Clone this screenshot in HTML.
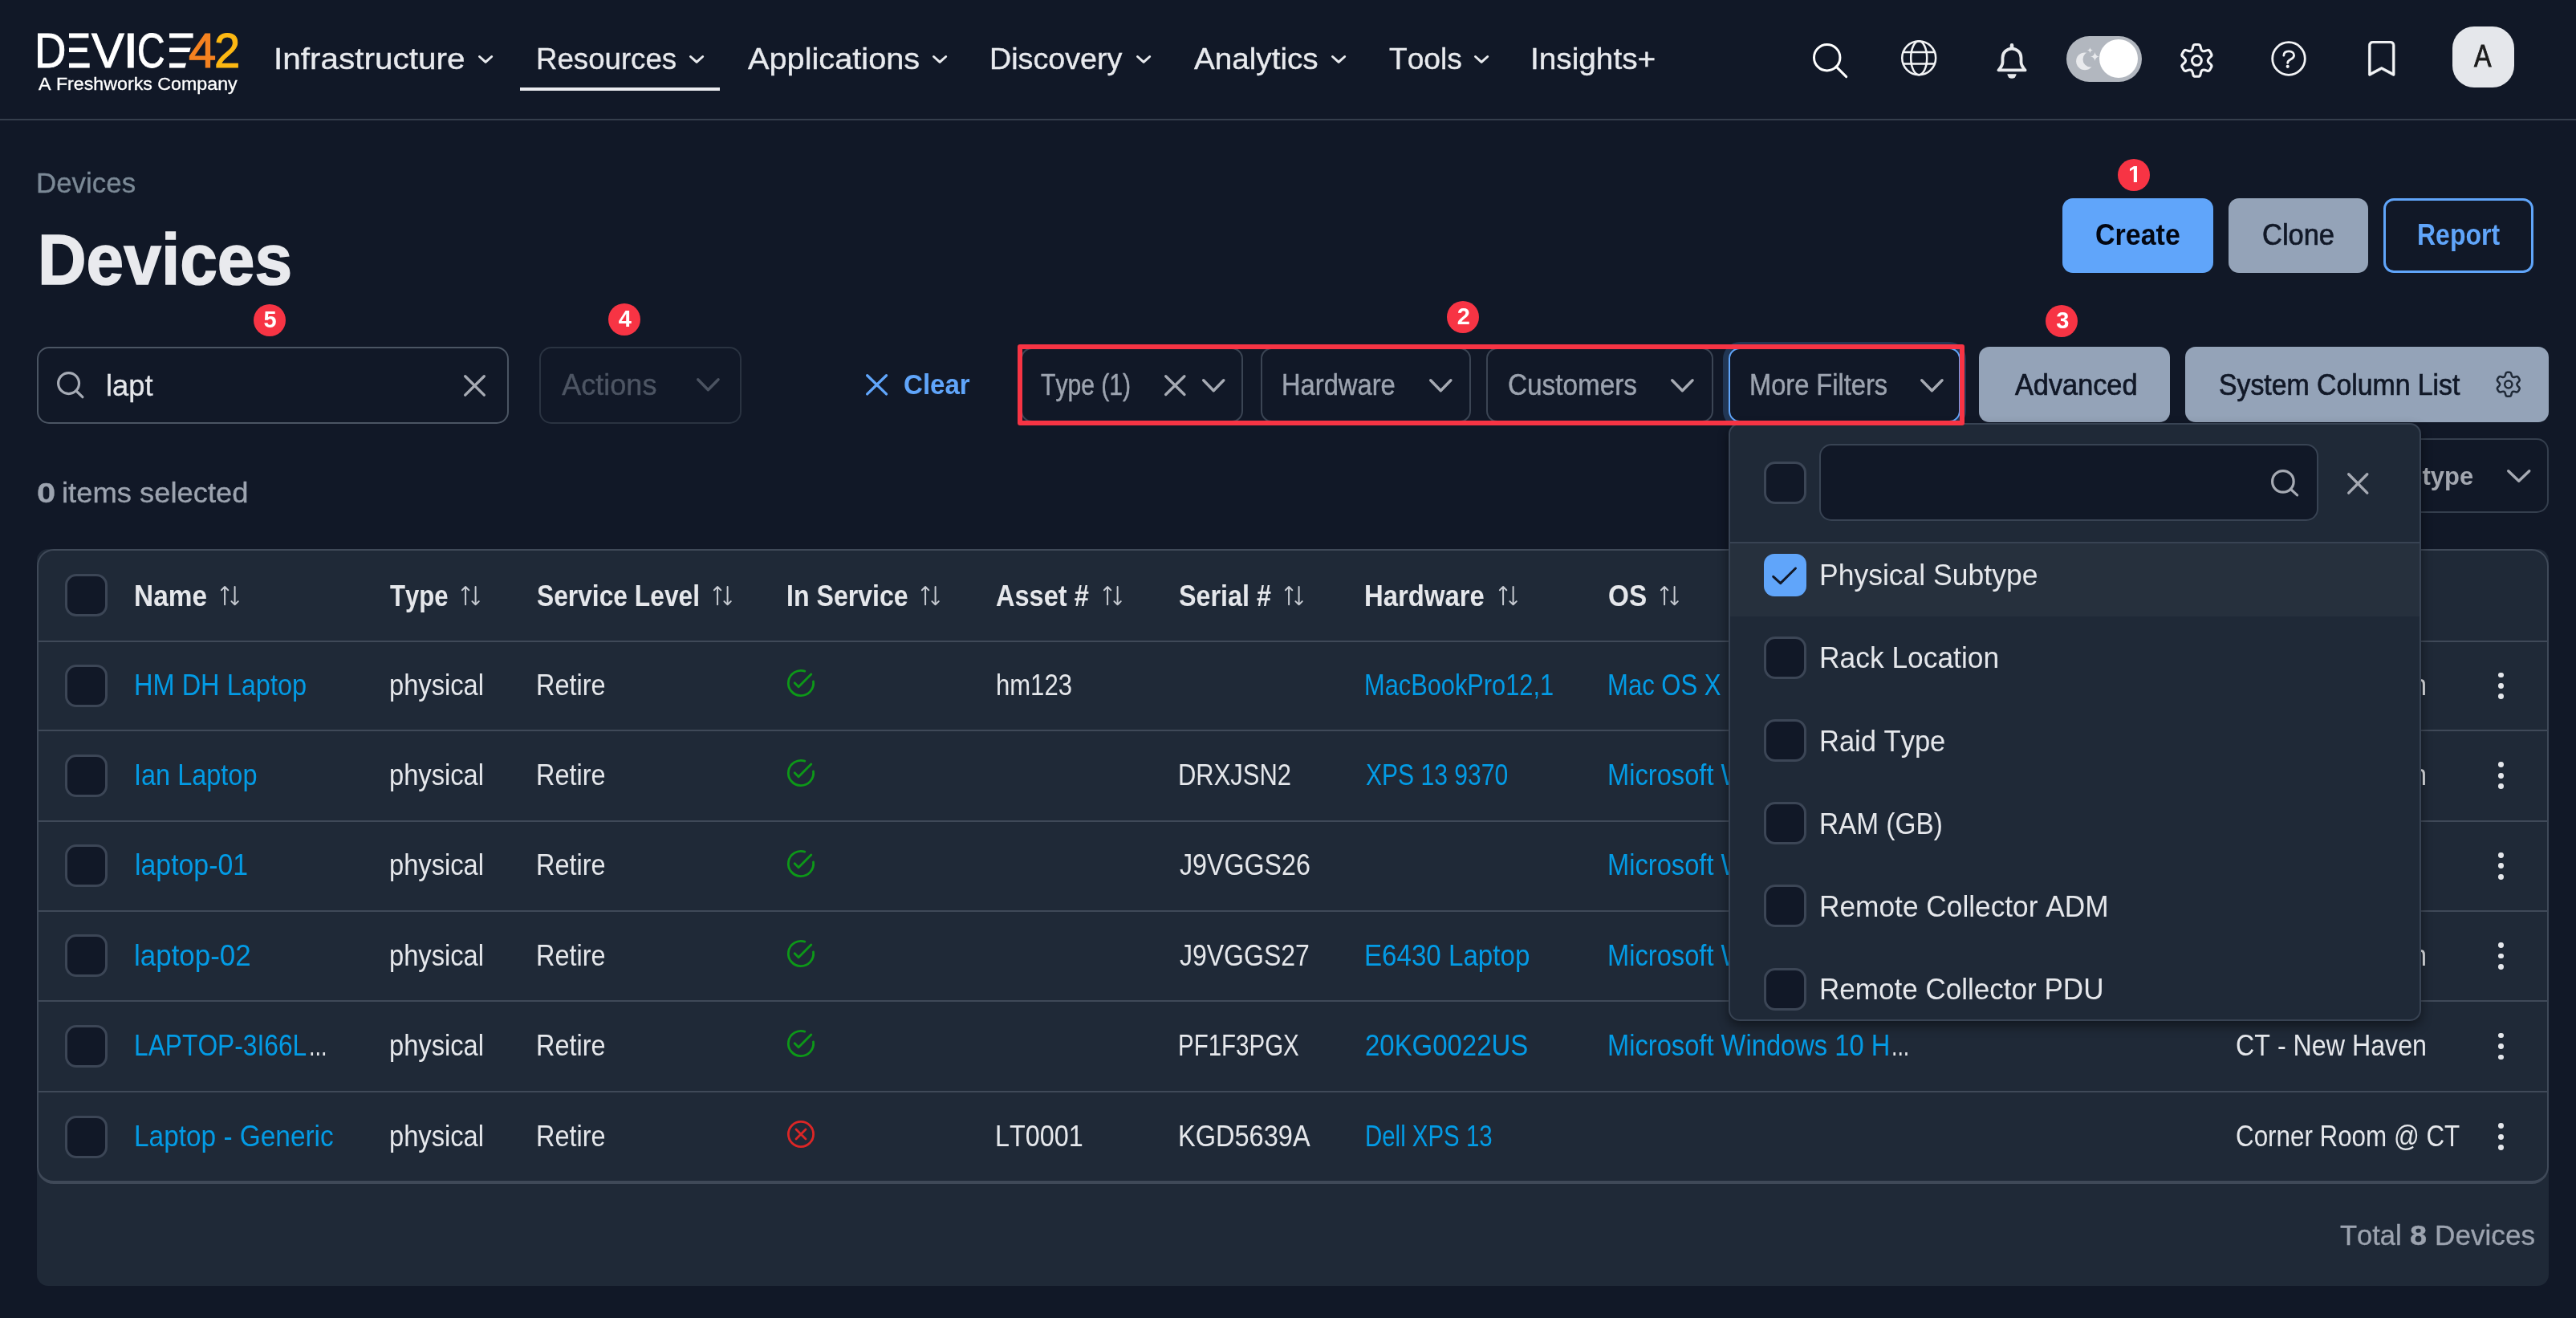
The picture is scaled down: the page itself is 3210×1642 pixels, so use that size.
<!DOCTYPE html>
<html lang="en"><head><meta charset="utf-8"><title>Devices</title>
<style>
html,body{margin:0;padding:0;background:#111827;}
body{width:3210px;height:1642px;position:relative;font-family:"Liberation Sans",sans-serif;font-kerning:none;}
.b{position:absolute;box-sizing:border-box;display:block;}
.t{position:absolute;white-space:nowrap;transform-origin:0 0;display:block;margin:0;font-weight:400;}
#root{position:absolute;left:0;top:0;width:3210px;height:1642px;overflow:hidden;will-change:transform;}
</style></head><body><div id="root">
<header>
<div class="b" style="left:0px;top:148px;width:3210px;height:2px;background:#353e4c;"></div>
<div aria-label="DEVICE42 - A Freshworks Company">
<span class="t" style="left:42.63px;top:28px;font-size:62px;line-height:69px;color:#fff;transform:scaleX(0.8796);-webkit-text-stroke:1px #fff;z-index:2;">D</span>
<span class="t" style="left:73.39px;top:28px;font-size:62px;line-height:69px;color:#fff;transform:scaleX(0.9850);-webkit-text-stroke:1px #fff;">E</span>
<div class="b" style="left:76.2px;top:38px;width:9.8px;height:50px;background:#111827;"></div>
<span class="t" style="left:113.63px;top:28px;font-size:62px;line-height:69px;color:#fff;transform:scaleX(0.9875);-webkit-text-stroke:1px #fff;">V</span>
<span class="t" style="left:152.77px;top:28px;font-size:62px;line-height:69px;color:#fff;transform:scaleX(1.1414);-webkit-text-stroke:1px #fff;">I</span>
<span class="t" style="left:171.17px;top:28px;font-size:62px;line-height:69px;color:#fff;transform:scaleX(0.7717);-webkit-text-stroke:1px #fff;z-index:2;">C</span>
<span class="t" style="left:197.59px;top:28px;font-size:62px;line-height:69px;color:#fff;transform:scaleX(1.1219);-webkit-text-stroke:1px #fff;clip-path:polygon(0 0,100% 0,100% 12%,62% 100%,0 100%);">E</span>
<div class="b" style="left:201.1px;top:38px;width:9.8px;height:50px;background:#111827;"></div>
<span class="t" style="left:235.08px;top:28px;font-size:62px;line-height:69px;color:#f58220;transform:scaleX(0.9954);-webkit-text-stroke:1.2px #f58220;">4</span>
<span class="t" style="left:266.99px;top:28px;font-size:62px;line-height:69px;color:#fdb813;transform:scaleX(0.9347);-webkit-text-stroke:1.2px #fdb813;">2</span>
<span class="t" style="left:47.85px;top:93px;font-size:21.5px;line-height:24px;color:#fff;transform:scaleX(1.0797);-webkit-text-stroke:0.3px #fff;">A Freshworks Company</span>
</div>
<nav>
<span class="t" style="left:340.86px;top:53px;font-size:37px;line-height:41px;color:#e8eaee;transform:scaleX(1.0939);-webkit-text-stroke:0.35px #e8eaee;">Infrastructure</span>
<svg class="b" style="left:595.50px;top:68.70px;overflow:visible;" width="18.20" height="9.90"><polyline points="1.50,1.50 9.10,8.40 16.70,1.50" fill="none" stroke="#e8eaee" stroke-width="3" stroke-linecap="round" stroke-linejoin="round"/></svg>
<span class="t" style="left:667.69px;top:53px;font-size:37px;line-height:41px;color:#e8eaee;transform:scaleX(0.9903);-webkit-text-stroke:0.35px #e8eaee;">Resources</span>
<svg class="b" style="left:858.80px;top:68.70px;overflow:visible;" width="18.20" height="9.90"><polyline points="1.50,1.50 9.10,8.40 16.70,1.50" fill="none" stroke="#e8eaee" stroke-width="3" stroke-linecap="round" stroke-linejoin="round"/></svg>
<span class="t" style="left:931.72px;top:53px;font-size:37px;line-height:41px;color:#e8eaee;transform:scaleX(1.0737);-webkit-text-stroke:0.35px #e8eaee;">Applications</span>
<svg class="b" style="left:1162.00px;top:68.70px;overflow:visible;" width="18.20" height="9.90"><polyline points="1.50,1.50 9.10,8.40 16.70,1.50" fill="none" stroke="#e8eaee" stroke-width="3" stroke-linecap="round" stroke-linejoin="round"/></svg>
<span class="t" style="left:1233.21px;top:53px;font-size:37px;line-height:41px;color:#e8eaee;transform:scaleX(1.0181);-webkit-text-stroke:0.35px #e8eaee;">Discovery</span>
<svg class="b" style="left:1416.00px;top:68.70px;overflow:visible;" width="18.20" height="9.90"><polyline points="1.50,1.50 9.10,8.40 16.70,1.50" fill="none" stroke="#e8eaee" stroke-width="3" stroke-linecap="round" stroke-linejoin="round"/></svg>
<span class="t" style="left:1488.22px;top:53px;font-size:37px;line-height:41px;color:#e8eaee;transform:scaleX(1.0447);-webkit-text-stroke:0.35px #e8eaee;">Analytics</span>
<svg class="b" style="left:1658.50px;top:68.70px;overflow:visible;" width="18.20" height="9.90"><polyline points="1.50,1.50 9.10,8.40 16.70,1.50" fill="none" stroke="#e8eaee" stroke-width="3" stroke-linecap="round" stroke-linejoin="round"/></svg>
<span class="t" style="left:1730.97px;top:53px;font-size:37px;line-height:41px;color:#e8eaee;transform:scaleX(1.0044);-webkit-text-stroke:0.35px #e8eaee;">Tools</span>
<svg class="b" style="left:1837.00px;top:68.70px;overflow:visible;" width="18.20" height="9.90"><polyline points="1.50,1.50 9.10,8.40 16.70,1.50" fill="none" stroke="#e8eaee" stroke-width="3" stroke-linecap="round" stroke-linejoin="round"/></svg>
<span class="t" style="left:1907.22px;top:53px;font-size:37px;line-height:41px;color:#e8eaee;transform:scaleX(1.0474);-webkit-text-stroke:0.35px #e8eaee;">Insights+</span>
<div class="b" style="left:648px;top:109px;width:249px;height:4px;background:#eaebef;"></div>
</nav>
<svg class="b" style="left:2259.30px;top:53.70px;overflow:visible;" width="43.20" height="43.10"><circle cx="17.71" cy="17.71" r="16.21" fill="none" stroke="#fff" stroke-width="3"/><path d="M29.18 29.18L41.70 41.60" stroke="#fff" stroke-width="3" stroke-linecap="round"/></svg>
<svg class="b" style="left:2369.40px;top:50.20px;overflow:visible;" width="44.40" height="44.40"><g fill="none" stroke="#f3f4f6" stroke-width="2.5"><circle cx="22.2" cy="22.2" r="20.95"/><ellipse cx="22.2" cy="22.2" rx="10.00" ry="20.95"/><path d="M2.53 15.00H41.87M2.53 29.40H41.87"/></g></svg>
<svg class="b" style="left:2488.20px;top:54.00px;overflow:visible;" width="38.00" height="44.00"><g fill="none" stroke="#e8eaed" stroke-width="3.8" stroke-linejoin="round" stroke-linecap="round"><path d="M19 6.6C12.5 6.6 7.5 11.6 7.5 18V23.5C7.5 27 5 30.5 2.4 33.4H35.6C33 30.5 30.5 27 30.5 23.5V18C30.5 11.6 25.5 6.6 19 6.6Z"/><path d="M19 2.4V5" stroke-width="4.6"/></g><path d="M13.4 38.3H24.6A5.6 5.5 0 0 1 13.4 38.3Z" fill="#e8eaed"/></svg>
<div class="b" style="left:2575px;top:44.8px;width:93.9px;height:57.3px;background:#b2b7bf;border-radius:29px;"></div>
<svg class="b" style="left:2575.00px;top:44.80px;overflow:visible;" width="94.00" height="57.30"><circle cx="23.0" cy="31.3" r="10.9" fill="#e9eaed"/><circle cx="30.2" cy="28.9" r="9.7" fill="#b2b7bf"/><path d="M29.4 14.000000000000002Q29.83 17.17 33.0 17.6Q29.83 18.03 29.4 21.200000000000003Q28.97 18.03 25.799999999999997 17.6Q28.97 17.17 29.4 14.000000000000002ZM35.5 20.1Q36.16 24.94 41.0 25.6Q36.16 26.26 35.5 31.1Q34.84 26.26 30.0 25.6Q34.84 24.94 35.5 20.1Z" fill="#e9eaed"/></svg>
<div class="b" style="left:2615.8px;top:48.8px;width:48.3px;height:48.3px;background:#fff;border-radius:25px;"></div>
<svg class="b" style="left:2714.20px;top:52.40px;overflow:visible;" width="46.80" height="46.80"><g fill="none" stroke="#f3f4f6" stroke-width="3.1" stroke-linejoin="round"><path d="M30.31 11.43Q29.05 10.70 28.57 8.52L27.93 5.69Q27.45 3.51 25.21 3.51L21.59 3.51Q19.35 3.51 18.87 5.69L18.23 8.52Q17.75 10.70 16.49 11.43L16.49 11.43Q15.23 12.15 13.10 11.49L10.33 10.62Q8.20 9.95 7.08 11.88L5.27 15.02Q4.15 16.96 5.79 18.47L7.93 20.44Q9.58 21.95 9.58 23.40L9.58 23.40Q9.58 24.85 7.93 26.36L5.79 28.33Q4.15 29.84 5.27 31.78L7.08 34.92Q8.20 36.85 10.33 36.18L13.10 35.31Q15.23 34.65 16.49 35.37L16.49 35.37Q17.75 36.10 18.23 38.28L18.87 41.11Q19.35 43.29 21.59 43.29L25.21 43.29Q27.45 43.29 27.93 41.11L28.57 38.28Q29.05 36.10 30.31 35.37L30.31 35.37Q31.57 34.65 33.70 35.31L36.47 36.18Q38.60 36.85 39.72 34.92L41.53 31.78Q42.65 29.84 41.01 28.33L38.87 26.36Q37.22 24.85 37.22 23.40L37.22 23.40Q37.22 21.95 38.87 20.44L41.01 18.47Q42.65 16.96 41.53 15.02L39.72 11.88Q38.60 9.95 36.47 10.62L33.70 11.49Q31.57 12.15 30.31 11.43Z"/><circle cx="23.400000000000002" cy="23.400000000000002" r="5.9"/></g></svg>
<svg class="b" style="left:2827.30px;top:47.60px;overflow:visible;" width="50.00" height="50.00"><g transform="translate(25,25)" fill="none" stroke="#f3f4f6" stroke-width="2.8" stroke-linecap="round"><circle cx="0" cy="0" r="20.3"/><path d="M-6.2 -3.8C-6.2 -7.4 -3.4 -9.2 0.3 -9.2C4 -9.2 6.6 -7 6.6 -4.1C6.6 -1.3 4.5 -0.1 2.3 1C-0.2 2.2 -1.3 3 -1.3 5.4"/></g><circle cx="23.7" cy="34.8" r="2.1" fill="#f3f4f6"/></svg>
<svg class="b" style="left:2946px;top:51px;color:#f3f4f6;stroke:#f3f4f6;stroke-width:.25;" width="43.5" height="43.5" viewBox="0 0 16 16" fill="currentColor"><path d="M2 2a2 2 0 0 1 2-2h8a2 2 0 0 1 2 2v13.5a.5.5 0 0 1-.777.416L8 13.101l-5.223 2.815A.5.5 0 0 1 2 15.5zm2-1a1 1 0 0 0-1 1v12.566l4.723-2.482a.5.5 0 0 1 .554 0L13 14.566V2a1 1 0 0 0-1-1z"/></svg>
<div class="b" style="left:3056px;top:32.7px;width:77px;height:76.5px;background:#e5e7eb;border-radius:27px;"></div>
<span class="t" style="left:3083.34px;top:48px;font-size:38.5px;line-height:43px;color:#1c1c1c;transform:scaleX(0.8383);-webkit-text-stroke:0.9px #1c1c1c;">A</span>
</header>
<main>
<span class="t" style="left:44.74px;top:208px;font-size:35.5px;line-height:40px;color:#7b8996;transform:scaleX(0.9831);-webkit-text-stroke:0.35px #7b8996;">Devices</span>
<h1 class="t" style="left:46.99px;top:273px;font-size:89px;line-height:100px;color:#e9eaee;font-weight:700;transform:scaleX(0.9425);-webkit-text-stroke:1.6px #e9eaee;">Devices</h1>
<div class="b" style="left:2638.8px;top:197.9px;width:40.2px;height:40.2px;background:#f73444;border-radius:20.1px;"></div>
<span class="t" style="left:2652.21px;top:201px;font-size:29px;line-height:32px;color:#fff;font-weight:700;transform:scaleX(1.02);clip-path:polygon(0px 0px,20px 0px,20px 22.9px,10.8px 22.9px,10.8px 30px,6.7px 30px,6.7px 22.9px,0px 22.9px);">1</span>
<div class="b" style="left:2569.7px;top:247.3px;width:188.2px;height:92.7px;background:#60a5fa;border-radius:13px;"></div>
<span class="t" style="left:2611.21px;top:272px;font-size:36.6px;line-height:41px;color:#030712;font-weight:700;transform:scaleX(0.9292);">Create</span>
<div class="b" style="left:2776.6px;top:247.3px;width:174.2px;height:92.7px;background:#94a3b8;border-radius:13px;"></div>
<span class="t" style="left:2819.35px;top:272px;font-size:36.6px;line-height:41px;color:#111827;transform:scaleX(0.9420);-webkit-text-stroke:0.7px #111827;">Clone</span>
<div class="b" style="left:2970px;top:247.3px;width:187px;height:92.7px;border:3px solid #60a5fa;border-radius:13px;"></div>
<span class="t" style="left:3011.86px;top:272px;font-size:36.6px;line-height:41px;color:#60a5fa;font-weight:700;transform:scaleX(0.8754);">Report</span>
<div class="b" style="left:315.79999999999995px;top:378.79999999999995px;width:40.2px;height:40.2px;background:#f73444;border-radius:20.1px;"></div>
<span class="t" style="left:328.59px;top:382px;font-size:29px;line-height:32px;color:#fff;font-weight:700;">5</span>
<div class="b" style="left:758.1px;top:378.0px;width:40.2px;height:40.2px;background:#f73444;border-radius:20.1px;"></div>
<span class="t" style="left:770.79px;top:381px;font-size:29px;line-height:32px;color:#fff;font-weight:700;">4</span>
<div class="b" style="left:1802.9px;top:374.5px;width:40.2px;height:40.2px;background:#f73444;border-radius:20.1px;"></div>
<span class="t" style="left:1815.81px;top:378px;font-size:29px;line-height:32px;color:#fff;font-weight:700;">2</span>
<div class="b" style="left:2549.1px;top:379.7px;width:40.2px;height:40.2px;background:#f73444;border-radius:20.1px;"></div>
<span class="t" style="left:2562.13px;top:383px;font-size:29px;line-height:32px;color:#fff;font-weight:700;">3</span>
<div class="b" style="left:46px;top:432px;width:587.5px;height:96px;border:2.5px solid #4b5563;border-radius:15px;"></div>
<svg class="b" style="left:70.80px;top:463.30px;overflow:visible;" width="33.50" height="33.30"><circle cx="14.57" cy="14.57" r="12.97" fill="none" stroke="#a6abb5" stroke-width="3.2"/><path d="M23.75 23.75L31.90 31.70" stroke="#a6abb5" stroke-width="3.2" stroke-linecap="round"/></svg>
<span class="t" style="left:131.55px;top:460px;font-size:36px;line-height:41px;color:#e5e7eb;transform:scaleX(1.0099);-webkit-text-stroke:0.3px #e5e7eb;">lapt</span>
<svg class="b" style="left:578.00px;top:467.00px;overflow:visible;" width="27.00" height="26.80"><path d="M1.7 1.7L25.30 25.10M25.30 1.7L1.7 25.10" fill="none" stroke="#a6aab3" stroke-width="3.4" stroke-linecap="round"/></svg>
<div class="b" style="left:672.1px;top:432px;width:251.5px;height:95.5px;border:2.5px solid #2a3341;border-radius:15px;"></div>
<span class="t" style="left:700.33px;top:459px;font-size:36px;line-height:41px;color:#4d5563;-webkit-text-stroke:0.4px #4d5563;">Actions</span>
<svg class="b" style="left:868.30px;top:471.40px;overflow:visible;" width="28.80" height="16.50"><polyline points="1.70,1.70 14.40,14.80 27.10,1.70" fill="none" stroke="#4b5361" stroke-width="3.4" stroke-linecap="round" stroke-linejoin="round"/></svg>
<svg class="b" style="left:1078.80px;top:465.80px;overflow:visible;" width="27.20" height="26.60"><path d="M1.7 1.7L25.50 24.90M25.50 1.7L1.7 24.90" fill="none" stroke="#60a5fa" stroke-width="3.4" stroke-linecap="round"/></svg>
<span class="t" style="left:1125.94px;top:459px;font-size:35.4px;line-height:40px;color:#60a5fa;font-weight:700;transform:scaleX(0.9346);">Clear</span>
<div class="b" style="left:1271.6px;top:433.2px;width:277.4px;height:92.8px;border:2.4px solid #3b4554;border-radius:14px;"></div>
<span class="t" style="left:1297.42px;top:459px;font-size:36px;line-height:41px;color:#9ca3af;transform:scaleX(0.8359);-webkit-text-stroke:0.45px #9ca3af;">Type (1)</span>
<svg class="b" style="left:1450.70px;top:467.20px;overflow:visible;" width="26.60" height="26.20"><path d="M1.7 1.7L24.90 24.50M24.90 1.7L1.7 24.50" fill="none" stroke="#a6aab3" stroke-width="3.4" stroke-linecap="round"/></svg>
<svg class="b" style="left:1498.30px;top:472.00px;overflow:visible;" width="28.50" height="16.50"><polyline points="1.70,1.70 14.25,14.80 26.80,1.70" fill="none" stroke="#a6aab3" stroke-width="3.4" stroke-linecap="round" stroke-linejoin="round"/></svg>
<div class="b" style="left:1570.6px;top:433.2px;width:262.2px;height:92.8px;border:2.4px solid #3b4554;border-radius:14px;"></div>
<span class="t" style="left:1596.52px;top:459px;font-size:36px;line-height:41px;color:#9ca3af;transform:scaleX(0.9082);-webkit-text-stroke:0.45px #9ca3af;">Hardware</span>
<svg class="b" style="left:1780.60px;top:472.00px;overflow:visible;" width="28.60" height="16.50"><polyline points="1.70,1.70 14.30,14.80 26.90,1.70" fill="none" stroke="#a6aab3" stroke-width="3.4" stroke-linecap="round" stroke-linejoin="round"/></svg>
<div class="b" style="left:1852.4px;top:433.2px;width:282.4px;height:92.8px;border:2.4px solid #3b4554;border-radius:14px;"></div>
<span class="t" style="left:1879.01px;top:459px;font-size:36px;line-height:41px;color:#9ca3af;transform:scaleX(0.9250);-webkit-text-stroke:0.45px #9ca3af;">Customers</span>
<svg class="b" style="left:2082.00px;top:472.00px;overflow:visible;" width="28.80" height="16.50"><polyline points="1.70,1.70 14.40,14.80 27.10,1.70" fill="none" stroke="#a6aab3" stroke-width="3.4" stroke-linecap="round" stroke-linejoin="round"/></svg>
<div class="b" style="left:2154.0px;top:433.2px;width:289.2px;height:92.8px;border:2.4px solid #60a5fa;border-radius:14px;box-shadow:0 0 0 7px #213654;"></div>
<span class="t" style="left:2180.02px;top:459px;font-size:36px;line-height:41px;color:#9ca3af;transform:scaleX(0.9060);-webkit-text-stroke:0.45px #9ca3af;">More Filters</span>
<svg class="b" style="left:2393.40px;top:472.00px;overflow:visible;" width="28.80" height="16.50"><polyline points="1.70,1.70 14.40,14.80 27.10,1.70" fill="none" stroke="#a6aab3" stroke-width="3.4" stroke-linecap="round" stroke-linejoin="round"/></svg>
<div class="b" style="left:2466px;top:432px;width:238px;height:93.6px;background:#94a3b8;border-radius:13px;"></div>
<span class="t" style="left:2510.53px;top:459px;font-size:36.6px;line-height:41px;color:#111827;transform:scaleX(0.9373);-webkit-text-stroke:0.7px #111827;">Advanced</span>
<div class="b" style="left:2723px;top:432px;width:453px;height:93.6px;background:#94a3b8;border-radius:13px;"></div>
<span class="t" style="left:2765.06px;top:459px;font-size:36.6px;line-height:41px;color:#111827;transform:scaleX(0.9236);-webkit-text-stroke:0.7px #111827;">System Column List</span>
<svg class="b" style="left:3108.40px;top:460.70px;overflow:visible;" width="35.60" height="35.60"><g fill="none" stroke="#1f2937" stroke-width="2.5" stroke-linejoin="round"><path d="M23.07 8.67Q22.11 8.12 21.72 6.48L21.24 4.44Q20.85 2.81 19.17 2.81L16.43 2.81Q14.75 2.81 14.36 4.44L13.88 6.48Q13.49 8.12 12.53 8.67L12.53 8.67Q11.57 9.22 9.96 8.74L7.95 8.14Q6.34 7.66 5.50 9.12L4.13 11.49Q3.29 12.95 4.51 14.10L6.03 15.54Q7.26 16.69 7.26 17.80L7.26 17.80Q7.26 18.91 6.03 20.06L4.51 21.50Q3.29 22.65 4.13 24.11L5.50 26.48Q6.34 27.94 7.95 27.46L9.96 26.86Q11.57 26.38 12.53 26.93L12.53 26.93Q13.49 27.48 13.88 29.12L14.36 31.16Q14.75 32.79 16.43 32.79L19.17 32.79Q20.85 32.79 21.24 31.16L21.72 29.12Q22.11 27.48 23.07 26.93L23.07 26.93Q24.03 26.38 25.64 26.86L27.65 27.46Q29.26 27.94 30.10 26.48L31.47 24.11Q32.31 22.65 31.09 21.50L29.57 20.06Q28.34 18.91 28.34 17.80L28.34 17.80Q28.34 16.69 29.57 15.54L31.09 14.10Q32.31 12.95 31.47 11.49L30.10 9.12Q29.26 7.66 27.65 8.14L25.64 8.74Q24.03 9.22 23.07 8.67Z"/><circle cx="17.8" cy="17.8" r="4.6"/></g></svg>
<div class="b" style="left:2900px;top:546.2px;width:275.5px;height:93px;border:2.5px solid #343e4d;border-radius:15px;"></div>
<span class="t" style="left:2959.97px;top:576px;font-size:31px;line-height:35px;color:#a3a7b0;font-weight:700;transform:scaleX(0.9984);">Subtype</span>
<svg class="b" style="left:3123.80px;top:585.10px;overflow:visible;" width="29.50" height="15.90"><polyline points="1.70,1.70 14.75,14.20 27.80,1.70" fill="none" stroke="#a6aab3" stroke-width="3.4" stroke-linecap="round" stroke-linejoin="round"/></svg>
<span class="t" style="left:45.55px;top:594px;font-size:35.5px;line-height:40px;color:#9ca3af;font-weight:700;transform:scaleX(1.1728);-webkit-text-stroke:0.35px #9ca3af;">0</span>
<span class="t" style="left:77.37px;top:594px;font-size:35px;line-height:39px;color:#9ca3af;transform:scaleX(1.0392);-webkit-text-stroke:0.35px #9ca3af;">items selected</span>
<section aria-label="Devices table">
<div class="b" style="left:46px;top:684px;width:3130px;height:918px;background:#1f2937;border-radius:14px;"></div>
<div class="b" style="left:46px;top:684px;width:3130px;height:791px;background:#1f2937;border:2.3px solid #3f4958;border-radius:21px;border-bottom-width:4px;"></div>
<div class="b" style="left:48.3px;top:797.85px;width:3125.4px;height:2.1px;background:#3f4958;"></div>
<div class="b" style="left:48.3px;top:908.75px;width:3125.4px;height:2.1px;background:#3f4958;"></div>
<div class="b" style="left:48.3px;top:1021.5500000000001px;width:3125.4px;height:2.1px;background:#3f4958;"></div>
<div class="b" style="left:48.3px;top:1133.8500000000001px;width:3125.4px;height:2.1px;background:#3f4958;"></div>
<div class="b" style="left:48.3px;top:1245.95px;width:3125.4px;height:2.1px;background:#3f4958;"></div>
<div class="b" style="left:48.3px;top:1358.75px;width:3125.4px;height:2.1px;background:#3f4958;"></div>
<div class="b" style="left:81px;top:715px;width:53px;height:53px;background:#111827;border:3.6px solid #3c4656;border-radius:14px;"></div>
<span class="t" style="left:166.76px;top:722px;font-size:36.3px;line-height:41px;color:#e5e7eb;font-weight:700;transform:scaleX(0.9212);">Name</span>
<svg class="b" style="left:274.60px;top:729.90px;overflow:visible;" width="22.60" height="24.30"><path d="M5.10 23.30V1.00M0.90 5.20L5.10 1.00L9.30 5.20M17.60 1.00V23.30M13.40 19.10L17.60 23.30L21.80 19.10" fill="none" stroke="#c6cad1" stroke-width="2" stroke-linecap="round" stroke-linejoin="round"/></svg>
<span class="t" style="left:485.55px;top:722px;font-size:36.3px;line-height:41px;color:#e5e7eb;font-weight:700;transform:scaleX(0.8571);">Type</span>
<svg class="b" style="left:575.40px;top:729.90px;overflow:visible;" width="22.60" height="24.30"><path d="M5.10 23.30V1.00M0.90 5.20L5.10 1.00L9.30 5.20M17.60 1.00V23.30M13.40 19.10L17.60 23.30L21.80 19.10" fill="none" stroke="#c6cad1" stroke-width="2" stroke-linecap="round" stroke-linejoin="round"/></svg>
<span class="t" style="left:669.29px;top:722px;font-size:36.3px;line-height:41px;color:#e5e7eb;font-weight:700;transform:scaleX(0.8749);">Service Level</span>
<svg class="b" style="left:888.60px;top:729.90px;overflow:visible;" width="22.60" height="24.30"><path d="M5.10 23.30V1.00M0.90 5.20L5.10 1.00L9.30 5.20M17.60 1.00V23.30M13.40 19.10L17.60 23.30L21.80 19.10" fill="none" stroke="#c6cad1" stroke-width="2" stroke-linecap="round" stroke-linejoin="round"/></svg>
<span class="t" style="left:980.05px;top:722px;font-size:36.3px;line-height:41px;color:#e5e7eb;font-weight:700;transform:scaleX(0.8847);">In Service</span>
<svg class="b" style="left:1148.40px;top:729.90px;overflow:visible;" width="22.60" height="24.30"><path d="M5.10 23.30V1.00M0.90 5.20L5.10 1.00L9.30 5.20M17.60 1.00V23.30M13.40 19.10L17.60 23.30L21.80 19.10" fill="none" stroke="#c6cad1" stroke-width="2" stroke-linecap="round" stroke-linejoin="round"/></svg>
<span class="t" style="left:1241.39px;top:722px;font-size:36.3px;line-height:41px;color:#e5e7eb;font-weight:700;transform:scaleX(0.8970);">Asset #</span>
<svg class="b" style="left:1374.60px;top:729.90px;overflow:visible;" width="22.60" height="24.30"><path d="M5.10 23.30V1.00M0.90 5.20L5.10 1.00L9.30 5.20M17.60 1.00V23.30M13.40 19.10L17.60 23.30L21.80 19.10" fill="none" stroke="#c6cad1" stroke-width="2" stroke-linecap="round" stroke-linejoin="round"/></svg>
<span class="t" style="left:1468.77px;top:722px;font-size:36.3px;line-height:41px;color:#e5e7eb;font-weight:700;transform:scaleX(0.8900);">Serial #</span>
<svg class="b" style="left:1601.00px;top:729.90px;overflow:visible;" width="22.60" height="24.30"><path d="M5.10 23.30V1.00M0.90 5.20L5.10 1.00L9.30 5.20M17.60 1.00V23.30M13.40 19.10L17.60 23.30L21.80 19.10" fill="none" stroke="#c6cad1" stroke-width="2" stroke-linecap="round" stroke-linejoin="round"/></svg>
<span class="t" style="left:1700.00px;top:722px;font-size:36.3px;line-height:41px;color:#e5e7eb;font-weight:700;transform:scaleX(0.9056);">Hardware</span>
<svg class="b" style="left:1867.80px;top:729.90px;overflow:visible;" width="22.60" height="24.30"><path d="M5.10 23.30V1.00M0.90 5.20L5.10 1.00L9.30 5.20M17.60 1.00V23.30M13.40 19.10L17.60 23.30L21.80 19.10" fill="none" stroke="#c6cad1" stroke-width="2" stroke-linecap="round" stroke-linejoin="round"/></svg>
<span class="t" style="left:2003.83px;top:722px;font-size:36.3px;line-height:41px;color:#e5e7eb;font-weight:700;transform:scaleX(0.9184);">OS</span>
<svg class="b" style="left:2068.60px;top:729.90px;overflow:visible;" width="22.60" height="24.30"><path d="M5.10 23.30V1.00M0.90 5.20L5.10 1.00L9.30 5.20M17.60 1.00V23.30M13.40 19.10L17.60 23.30L21.80 19.10" fill="none" stroke="#c6cad1" stroke-width="2" stroke-linecap="round" stroke-linejoin="round"/></svg>
<div class="b" style="left:81px;top:827.8499999999999px;width:53px;height:53px;background:#111827;border:3.6px solid #3c4656;border-radius:14px;"></div>
<span class="t" style="left:167.13px;top:833px;font-size:36px;line-height:41px;color:#039be5;transform:scaleX(0.9036);">HM DH Laptop</span>
<span class="t" style="left:484.60px;top:833px;font-size:36px;line-height:41px;color:#e5e7eb;transform:scaleX(0.9072);">physical</span>
<span class="t" style="left:668.34px;top:833px;font-size:36px;line-height:41px;color:#e5e7eb;transform:scaleX(0.9008);">Retire</span>
<svg class="b" style="left:978.20px;top:831.25px;overflow:visible;" width="40.00" height="40.00"><g fill="none" stroke="#0d9818" stroke-width="2.8" stroke-linecap="round" stroke-linejoin="round"><path d="M35.51 17.93A15.65 15.65 0 1 1 24.84 5.12"/><polyline points="12.2,19.7 17.1,24.8 32.8,8.9"/></g></svg>
<span class="t" style="left:1240.85px;top:833px;font-size:36px;line-height:41px;color:#e5e7eb;transform:scaleX(0.8623);">hm123</span>
<span class="t" style="left:1700.47px;top:833px;font-size:36px;line-height:41px;color:#039be5;transform:scaleX(0.8551);">MacBookPro12,1</span>
<span class="t" style="left:2003.45px;top:833px;font-size:36px;line-height:41px;color:#039be5;transform:scaleX(0.8632);">Mac OS X</span>
<span class="t" style="left:2786.36px;top:833px;font-size:36px;line-height:41px;color:#e5e7eb;transform:scaleX(0.8946);">CT - New Haven</span>
<div class="b" style="left:3113.25px;top:837.5499999999998px;width:6.9px;height:6.9px;background:#e5e7eb;border-radius:3.45px;"></div>
<div class="b" style="left:3113.25px;top:850.9999999999999px;width:6.9px;height:6.9px;background:#e5e7eb;border-radius:3.45px;"></div>
<div class="b" style="left:3113.25px;top:864.4499999999999px;width:6.9px;height:6.9px;background:#e5e7eb;border-radius:3.45px;"></div>
<div class="b" style="left:81px;top:939.7px;width:53px;height:53px;background:#111827;border:3.6px solid #3c4656;border-radius:14px;"></div>
<span class="t" style="left:166.80px;top:945px;font-size:36px;line-height:41px;color:#039be5;transform:scaleX(0.9019);">Ian Laptop</span>
<span class="t" style="left:484.60px;top:945px;font-size:36px;line-height:41px;color:#e5e7eb;transform:scaleX(0.9072);">physical</span>
<span class="t" style="left:668.34px;top:945px;font-size:36px;line-height:41px;color:#e5e7eb;transform:scaleX(0.9008);">Retire</span>
<svg class="b" style="left:978.20px;top:943.10px;overflow:visible;" width="40.00" height="40.00"><g fill="none" stroke="#0d9818" stroke-width="2.8" stroke-linecap="round" stroke-linejoin="round"><path d="M35.51 17.93A15.65 15.65 0 1 1 24.84 5.12"/><polyline points="12.2,19.7 17.1,24.8 32.8,8.9"/></g></svg>
<span class="t" style="left:1467.96px;top:945px;font-size:36px;line-height:41px;color:#e5e7eb;transform:scaleX(0.8595);">DRXJSN2</span>
<span class="t" style="left:1702.32px;top:945px;font-size:36px;line-height:41px;color:#039be5;transform:scaleX(0.8354);">XPS 13 9370</span>
<span class="t" style="left:2003.32px;top:945px;font-size:36px;line-height:41px;color:#039be5;transform:scaleX(0.9076);">Microsoft Windows 10 H</span>
<span class="t" style="left:2356.56px;top:945px;font-size:36px;line-height:41px;color:#e5e7eb;transform:scaleX(0.7426);">...</span>
<span class="t" style="left:2786.36px;top:945px;font-size:36px;line-height:41px;color:#e5e7eb;transform:scaleX(0.8946);">CT - New Haven</span>
<div class="b" style="left:3113.25px;top:949.4px;width:6.9px;height:6.9px;background:#e5e7eb;border-radius:3.45px;"></div>
<div class="b" style="left:3113.25px;top:962.85px;width:6.9px;height:6.9px;background:#e5e7eb;border-radius:3.45px;"></div>
<div class="b" style="left:3113.25px;top:976.3000000000001px;width:6.9px;height:6.9px;background:#e5e7eb;border-radius:3.45px;"></div>
<div class="b" style="left:81px;top:1052.25px;width:53px;height:53px;background:#111827;border:3.6px solid #3c4656;border-radius:14px;"></div>
<span class="t" style="left:167.52px;top:1057px;font-size:36px;line-height:41px;color:#039be5;transform:scaleX(0.9395);">laptop-01</span>
<span class="t" style="left:484.60px;top:1057px;font-size:36px;line-height:41px;color:#e5e7eb;transform:scaleX(0.9072);">physical</span>
<span class="t" style="left:668.34px;top:1057px;font-size:36px;line-height:41px;color:#e5e7eb;transform:scaleX(0.9008);">Retire</span>
<svg class="b" style="left:978.20px;top:1055.65px;overflow:visible;" width="40.00" height="40.00"><g fill="none" stroke="#0d9818" stroke-width="2.8" stroke-linecap="round" stroke-linejoin="round"><path d="M35.51 17.93A15.65 15.65 0 1 1 24.84 5.12"/><polyline points="12.2,19.7 17.1,24.8 32.8,8.9"/></g></svg>
<span class="t" style="left:1470.00px;top:1057px;font-size:36px;line-height:41px;color:#e5e7eb;transform:scaleX(0.8942);">J9VGGS26</span>
<span class="t" style="left:2003.32px;top:1057px;font-size:36px;line-height:41px;color:#039be5;transform:scaleX(0.9076);">Microsoft Windows 10 H</span>
<span class="t" style="left:2356.56px;top:1057px;font-size:36px;line-height:41px;color:#e5e7eb;transform:scaleX(0.7426);">...</span>
<div class="b" style="left:3113.25px;top:1061.9499999999998px;width:6.9px;height:6.9px;background:#e5e7eb;border-radius:3.45px;"></div>
<div class="b" style="left:3113.25px;top:1075.3999999999999px;width:6.9px;height:6.9px;background:#e5e7eb;border-radius:3.45px;"></div>
<div class="b" style="left:3113.25px;top:1088.85px;width:6.9px;height:6.9px;background:#e5e7eb;border-radius:3.45px;"></div>
<div class="b" style="left:81px;top:1164.45px;width:53px;height:53px;background:#111827;border:3.6px solid #3c4656;border-radius:14px;"></div>
<span class="t" style="left:167.45px;top:1170px;font-size:36px;line-height:41px;color:#039be5;transform:scaleX(0.9707);">laptop-02</span>
<span class="t" style="left:484.60px;top:1170px;font-size:36px;line-height:41px;color:#e5e7eb;transform:scaleX(0.9072);">physical</span>
<span class="t" style="left:668.34px;top:1170px;font-size:36px;line-height:41px;color:#e5e7eb;transform:scaleX(0.9008);">Retire</span>
<svg class="b" style="left:978.20px;top:1167.85px;overflow:visible;" width="40.00" height="40.00"><g fill="none" stroke="#0d9818" stroke-width="2.8" stroke-linecap="round" stroke-linejoin="round"><path d="M35.51 17.93A15.65 15.65 0 1 1 24.84 5.12"/><polyline points="12.2,19.7 17.1,24.8 32.8,8.9"/></g></svg>
<span class="t" style="left:1470.00px;top:1170px;font-size:36px;line-height:41px;color:#e5e7eb;transform:scaleX(0.8886);">J9VGGS27</span>
<span class="t" style="left:1700.28px;top:1170px;font-size:36px;line-height:41px;color:#039be5;transform:scaleX(0.9202);">E6430 Laptop</span>
<span class="t" style="left:2003.32px;top:1170px;font-size:36px;line-height:41px;color:#039be5;transform:scaleX(0.9076);">Microsoft Windows 10 H</span>
<span class="t" style="left:2356.56px;top:1170px;font-size:36px;line-height:41px;color:#e5e7eb;transform:scaleX(0.7426);">...</span>
<span class="t" style="left:2786.36px;top:1170px;font-size:36px;line-height:41px;color:#e5e7eb;transform:scaleX(0.8946);">CT - New Haven</span>
<div class="b" style="left:3113.25px;top:1174.1499999999999px;width:6.9px;height:6.9px;background:#e5e7eb;border-radius:3.45px;"></div>
<div class="b" style="left:3113.25px;top:1187.6px;width:6.9px;height:6.9px;background:#e5e7eb;border-radius:3.45px;"></div>
<div class="b" style="left:3113.25px;top:1201.05px;width:6.9px;height:6.9px;background:#e5e7eb;border-radius:3.45px;"></div>
<div class="b" style="left:81px;top:1276.9px;width:53px;height:53px;background:#111827;border:3.6px solid #3c4656;border-radius:14px;"></div>
<span class="t" style="left:167.20px;top:1282px;font-size:36px;line-height:41px;color:#039be5;transform:scaleX(0.8818);">LAPTOP-3I66L</span>
<span class="t" style="left:385.03px;top:1282px;font-size:36px;line-height:41px;color:#e5e7eb;transform:scaleX(0.7511);">...</span>
<span class="t" style="left:484.60px;top:1282px;font-size:36px;line-height:41px;color:#e5e7eb;transform:scaleX(0.9072);">physical</span>
<span class="t" style="left:668.34px;top:1282px;font-size:36px;line-height:41px;color:#e5e7eb;transform:scaleX(0.9008);">Retire</span>
<svg class="b" style="left:978.20px;top:1280.30px;overflow:visible;" width="40.00" height="40.00"><g fill="none" stroke="#0d9818" stroke-width="2.8" stroke-linecap="round" stroke-linejoin="round"><path d="M35.51 17.93A15.65 15.65 0 1 1 24.84 5.12"/><polyline points="12.2,19.7 17.1,24.8 32.8,8.9"/></g></svg>
<span class="t" style="left:1468.08px;top:1282px;font-size:36px;line-height:41px;color:#e5e7eb;transform:scaleX(0.8190);">PF1F3PGX</span>
<span class="t" style="left:1701.34px;top:1282px;font-size:36px;line-height:41px;color:#039be5;transform:scaleX(0.9150);">20KG0022US</span>
<span class="t" style="left:2003.32px;top:1282px;font-size:36px;line-height:41px;color:#039be5;transform:scaleX(0.9076);">Microsoft Windows 10 H</span>
<span class="t" style="left:2356.56px;top:1282px;font-size:36px;line-height:41px;color:#e5e7eb;transform:scaleX(0.7426);">...</span>
<span class="t" style="left:2786.36px;top:1282px;font-size:36px;line-height:41px;color:#e5e7eb;transform:scaleX(0.8946);">CT - New Haven</span>
<div class="b" style="left:3113.25px;top:1286.6px;width:6.9px;height:6.9px;background:#e5e7eb;border-radius:3.45px;"></div>
<div class="b" style="left:3113.25px;top:1300.05px;width:6.9px;height:6.9px;background:#e5e7eb;border-radius:3.45px;"></div>
<div class="b" style="left:3113.25px;top:1313.5px;width:6.9px;height:6.9px;background:#e5e7eb;border-radius:3.45px;"></div>
<div class="b" style="left:81px;top:1389.65px;width:53px;height:53px;background:#111827;border:3.6px solid #3c4656;border-radius:14px;"></div>
<span class="t" style="left:167.06px;top:1395px;font-size:36px;line-height:41px;color:#039be5;transform:scaleX(0.9275);">Laptop - Generic</span>
<span class="t" style="left:484.60px;top:1395px;font-size:36px;line-height:41px;color:#e5e7eb;transform:scaleX(0.9072);">physical</span>
<span class="t" style="left:668.34px;top:1395px;font-size:36px;line-height:41px;color:#e5e7eb;transform:scaleX(0.9008);">Retire</span>
<svg class="b" style="left:978.10px;top:1393.25px;overflow:visible;" width="40.00" height="40.00"><g fill="none" stroke="#dc2626" stroke-width="2.8" stroke-linecap="round"><circle cx="20" cy="20" r="15.6"/><path d="M14 14L26 26M26 14L14 26"/></g></svg>
<span class="t" style="left:1240.35px;top:1395px;font-size:36px;line-height:41px;color:#e5e7eb;transform:scaleX(0.8979);">LT0001</span>
<span class="t" style="left:1467.83px;top:1395px;font-size:36px;line-height:41px;color:#e5e7eb;transform:scaleX(0.9040);">KGD5639A</span>
<span class="t" style="left:1700.59px;top:1395px;font-size:36px;line-height:41px;color:#039be5;transform:scaleX(0.8171);">Dell XPS 13</span>
<span class="t" style="left:2786.41px;top:1395px;font-size:36px;line-height:41px;color:#e5e7eb;transform:scaleX(0.8709);">Corner Room @ CT</span>
<div class="b" style="left:3113.25px;top:1399.35px;width:6.9px;height:6.9px;background:#e5e7eb;border-radius:3.45px;"></div>
<div class="b" style="left:3113.25px;top:1412.8px;width:6.9px;height:6.9px;background:#e5e7eb;border-radius:3.45px;"></div>
<div class="b" style="left:3113.25px;top:1426.25px;width:6.9px;height:6.9px;background:#e5e7eb;border-radius:3.45px;"></div>
<span class="t" style="left:2915.63px;top:1519px;font-size:35.7px;line-height:40px;color:#9ca3af;transform:scaleX(0.9662);-webkit-text-stroke:0.35px #9ca3af;">Total</span>
<span class="t" style="left:3002.70px;top:1519px;font-size:35.7px;line-height:40px;color:#9ca3af;font-weight:700;transform:scaleX(1.0611);-webkit-text-stroke:0.35px #9ca3af;">8</span>
<span class="t" style="left:3033.71px;top:1519px;font-size:35.7px;line-height:40px;color:#9ca3af;transform:scaleX(0.9857);-webkit-text-stroke:0.35px #9ca3af;">Devices</span>
</section>
<section aria-label="More Filters">
<div class="b" style="left:2153.9px;top:526.5px;width:863.5px;height:745px;background:#1f2937;border:2.5px solid #384353;border-radius:14px;box-shadow:0 6px 14px rgba(0,0,0,.45);"></div>
<div class="b" style="left:2156.3px;top:676px;width:858.7px;height:91.7px;background:#26303d;"></div>
<div class="b" style="left:2156.3px;top:675px;width:858.7px;height:2.2px;background:#384353;"></div>
<div class="b" style="left:2198px;top:575px;width:53px;height:53px;background:#111827;border:3.6px solid #3c4656;border-radius:14px;"></div>
<div class="b" style="left:2267px;top:552.8px;width:621.5px;height:96.4px;background:#111827;border:2.5px solid #384353;border-radius:15px;"></div>
<svg class="b" style="left:2829.50px;top:584.80px;overflow:visible;" width="34.20" height="33.50"><circle cx="14.88" cy="14.88" r="13.28" fill="none" stroke="#a6aab3" stroke-width="3.2"/><path d="M24.27 24.27L32.60 31.90" stroke="#a6aab3" stroke-width="3.2" stroke-linecap="round"/></svg>
<svg class="b" style="left:2925.40px;top:588.50px;overflow:visible;" width="26.50" height="26.80"><path d="M1.7 1.7L24.80 25.10M24.80 1.7L1.7 25.10" fill="none" stroke="#a6aab3" stroke-width="3.4" stroke-linecap="round"/></svg>
<div class="b" style="left:2198px;top:689.5px;width:53px;height:53px;background:#60a5fa;border-radius:13px;"></div>
<svg class="b" style="left:2198.00px;top:689.50px;overflow:visible;" width="53.00" height="53.00"><polyline points="11.7,28.3 20.7,36.6 39.5,18" fill="none" stroke="#111827" stroke-width="3" stroke-linecap="round" stroke-linejoin="round"/></svg>
<span class="t" style="left:2266.99px;top:696px;font-size:36.2px;line-height:41px;color:#e5e7eb;transform:scaleX(0.9813);">Physical Subtype</span>
<div class="b" style="left:2198px;top:792.7px;width:53px;height:53px;background:#111827;border:3.6px solid #3c4656;border-radius:14px;"></div>
<span class="t" style="left:2267.00px;top:799px;font-size:36.2px;line-height:41px;color:#e5e7eb;transform:scaleX(0.9773);">Rack Location</span>
<div class="b" style="left:2198px;top:895.9px;width:53px;height:53px;background:#111827;border:3.6px solid #3c4656;border-radius:14px;"></div>
<span class="t" style="left:2267.07px;top:903px;font-size:36.2px;line-height:41px;color:#e5e7eb;transform:scaleX(0.9538);">Raid Type</span>
<div class="b" style="left:2198px;top:999.0999999999999px;width:53px;height:53px;background:#111827;border:3.6px solid #3c4656;border-radius:14px;"></div>
<span class="t" style="left:2267.16px;top:1006px;font-size:36.2px;line-height:41px;color:#e5e7eb;transform:scaleX(0.9215);">RAM (GB)</span>
<div class="b" style="left:2198px;top:1102.3px;width:53px;height:53px;background:#111827;border:3.6px solid #3c4656;border-radius:14px;"></div>
<span class="t" style="left:2267.01px;top:1109px;font-size:36.2px;line-height:41px;color:#e5e7eb;transform:scaleX(0.9747);">Remote Collector ADM</span>
<div class="b" style="left:2198px;top:1205.5px;width:53px;height:53px;background:#111827;border:3.6px solid #3c4656;border-radius:14px;"></div>
<span class="t" style="left:2267.02px;top:1212px;font-size:36.2px;line-height:41px;color:#e5e7eb;transform:scaleX(0.9684);">Remote Collector PDU</span>
</section>
<div class="b" style="left:1267.8px;top:429px;width:1180.4px;height:101px;border:6px solid #f73444;border-radius:3px;"></div>
</main>
</div></body></html>
